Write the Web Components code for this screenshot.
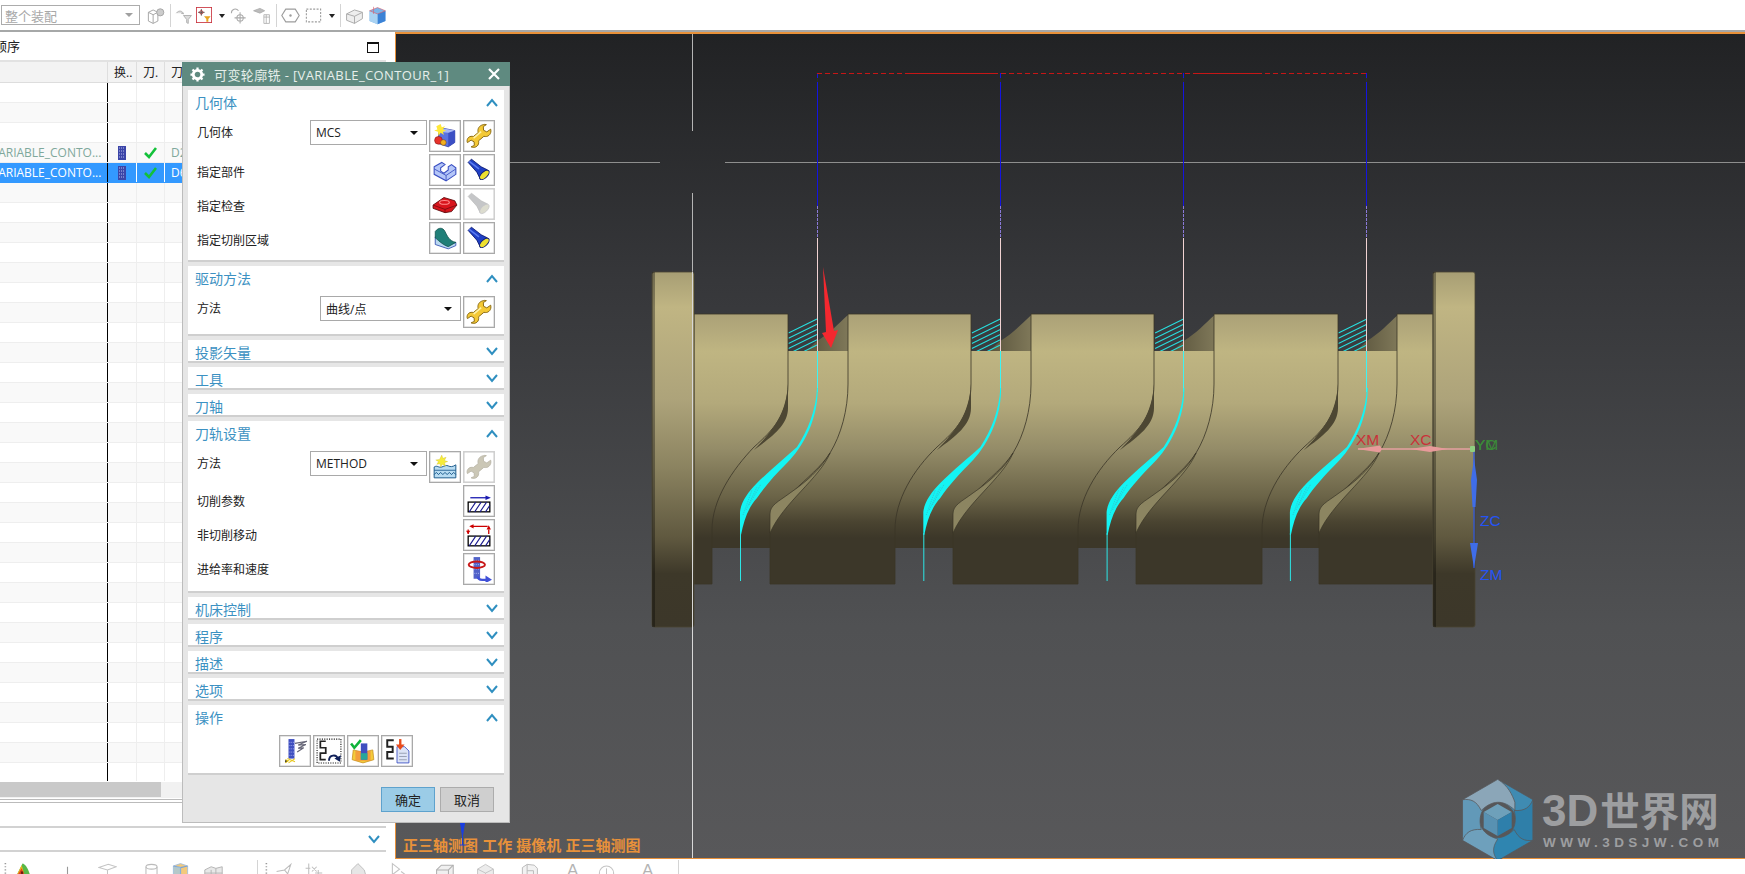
<!DOCTYPE html>
<html lang="zh">
<head>
<meta charset="utf-8">
<title>可变轮廓铣</title>
<style>
  html, body { margin: 0; height: 874px; overflow: hidden; background: #fff; }
  body { font-family: "Open Sans", "Noto Sans CJK SC", sans-serif; }
</style>
</head>
<body>
<cad-app>
  <cad-toolbar slot="top" kind="top"></cad-toolbar>
  <nav-panel slot="nav"></nav-panel>
  <cad-viewport slot="view"></cad-viewport>
  <cad-toolbar slot="bottom" kind="bottom"></cad-toolbar>
  <op-dialog slot="dialog" heading="可变轮廓铣 - [VARIABLE_CONTOUR_1]">
    <dlg-panel heading="几何体" open>
      <dlg-row label="几何体" top>
        <dlg-select value="MCS" width="117"></dlg-select>
        <nx-icon name="geomNew" framed></nx-icon>
        <nx-icon name="wrench" framed></nx-icon>
      </dlg-row>
      <dlg-row label="指定部件">
        <nx-icon name="part" framed></nx-icon>
        <nx-icon name="torch" framed></nx-icon>
      </dlg-row>
      <dlg-row label="指定检查">
        <nx-icon name="check" framed></nx-icon>
        <nx-icon name="torchOff" framed off></nx-icon>
      </dlg-row>
      <dlg-row label="指定切削区域">
        <nx-icon name="area" framed></nx-icon>
        <nx-icon name="torch" framed></nx-icon>
      </dlg-row>
    </dlg-panel>
    <dlg-panel heading="驱动方法" open>
      <dlg-row label="方法" top>
        <dlg-select value="曲线/点" width="141"></dlg-select>
        <nx-icon name="wrench" framed></nx-icon>
      </dlg-row>
    </dlg-panel>
    <dlg-panel heading="投影矢量"></dlg-panel>
    <dlg-panel heading="工具"></dlg-panel>
    <dlg-panel heading="刀轴"></dlg-panel>
    <dlg-panel heading="刀轨设置" open>
      <dlg-row label="方法" top>
        <dlg-select value="METHOD" width="117"></dlg-select>
        <nx-icon name="method" framed></nx-icon>
        <nx-icon name="wrenchOff" framed off></nx-icon>
      </dlg-row>
      <dlg-row label="切削参数" flat><nx-icon name="cutParams" framed></nx-icon></dlg-row>
      <dlg-row label="非切削移动" flat><nx-icon name="nonCut" framed></nx-icon></dlg-row>
      <dlg-row label="进给率和速度" flat><nx-icon name="feeds" framed></nx-icon></dlg-row>
    </dlg-panel>
    <dlg-panel heading="机床控制"></dlg-panel>
    <dlg-panel heading="程序"></dlg-panel>
    <dlg-panel heading="描述"></dlg-panel>
    <dlg-panel heading="选项"></dlg-panel>
    <dlg-panel heading="操作" open>
      <dlg-row center>
        <nx-icon name="generate" framed></nx-icon>
        <nx-icon name="replay" framed></nx-icon>
        <nx-icon name="verify" framed></nx-icon>
        <nx-icon name="listing" framed></nx-icon>
      </dlg-row>
    </dlg-panel>
  </op-dialog>
</cad-app>

<script>
// Icon artwork, all on a 24x24 box.
const WRENCH = "M17 1.500c-3.500 0-6 2.500-6 5.500 0 .8.1 1.300.3 1.800L6.800 12.500c-3-.9-5.800 1-5.800 4 0 .7.1 1.200.3 1.600l3.400-2.300 2.800 1.600.2 3.300-3 1.300c3 1.500 7-.3 7-4 0-.6 0-1-.2-1.500l5-4.200c3.500 1 6.500-1.500 6.500-5 0-.6-.1-1.100-.2-1.600l-3.600 2.500-3-1.500-.2-3.400 2.800-1.800c-.6-.2-1.100-.3-1.800-.3z";
const SNAKE = '<path d="M9 2H3v6h5v5H3v6h6" fill="none" stroke="#222" stroke-width="1.800"/>';
const HATCH = '<rect x="2" y="13" width="20" height="9" fill="#fff" stroke="#000" stroke-width="1.200"/><path d="M3 22l6-9M8 22l6-9M13 22l6-9M18 22l4-6" stroke="#1a1a90" stroke-width="1"/>';
const ICONS = {
  wrench: `<path d="${WRENCH}" fill="#f4c936" stroke="#8a6a12" stroke-width=".9"/><path d="M7 14l7-6" stroke="#fff2a8" stroke-width="1.400"/>`,
  wrenchOff: `<path d="${WRENCH}" fill="#cbc7b6" stroke="#b5b1a2" stroke-width=".7"/>`,
  geomNew: `<path d="M6 8l5-3 10 2v11l-6 4-9-3z" fill="#5a72e0" stroke="#26349a" stroke-width=".7"/><path d="M15 9l6-2v11l-6 4z" fill="#3b4fc4"/><path d="M6 8l9 1 6-2-10-2z" fill="#a9b8f4"/><path d="M8 1l1 3 3-1-2 3 3 1-3 1 1 3-3-2-2 3-.5-4L2 7l3-1-1-3z" fill="#ffe838"/><circle cx="6" cy="16" r="3.600" fill="#e8322a" stroke="#7a1010" stroke-width=".5"/><circle cx="10.500" cy="18" r="2.600" fill="#f2b020" stroke="#7a4a10" stroke-width=".5"/>`,
  part: `<path d="M2 9l7-4 3 2-4 3v3l3 2 4-3V9l3-2 4 3v6l-9 6-11-6z" fill="#b4c6f8" stroke="#3a4fc2" stroke-width="1"/><path d="M2 11l11 6 9-6M13 17v5" fill="none" stroke="#3a4fc2" stroke-width=".8"/>`,
  torch: `<path d="M2 5l3-3 9 7 6 3-7 8-3-6z" fill="#1f3fc4" stroke="#0c1a70" stroke-width=".8"/><path d="M3 4l9 7" stroke="#5c7cf0" stroke-width="1.400"/><ellipse cx="17" cy="16.500" rx="5.500" ry="2.800" transform="rotate(-45 17 16.500)" fill="#eee030" stroke="#0c1a70" stroke-width=".9"/>`,
  torchOff: `<path d="M2 5l3-3 9 7 6 3-7 8-3-6z" fill="#c5c6c8" stroke="#bbb" stroke-width=".6"/><ellipse cx="17" cy="16.500" rx="5.500" ry="2.800" transform="rotate(-45 17 16.500)" fill="#dcdccf" stroke="#c5c6c8" stroke-width=".7"/>`,
  check: `<path d="M1 13l10-7 10 3 2 4-5 6-6 1-11-4z" fill="#d8141c" stroke="#5a0a0c" stroke-width=".8"/><path d="M1 13l11 4 11-4M12 17v3" fill="none" stroke="#7a0c10" stroke-width=".8"/><ellipse cx="11.500" cy="10.500" rx="4.500" ry="1.800" fill="none" stroke="#ff8f8f" stroke-width="1"/>`,
  area: `<path d="M3 11L3 18 15 22 22 19 22 16 14 19 6 9z" fill="#b9d8f0" stroke="#3450b0" stroke-width=".8"/><path d="M3 6C6 2 10 2 12 6s4 9 10 10l-7 4C9 18 5 13 3 12z" fill="#207f78" stroke="#0e4f4a" stroke-width=".7"/>`,
  method: `<path d="M2 12c3-2 4 1 7 0s4-2 6-1 4 1 7-1v12H2z" fill="#b8dcf2" stroke="#1c5a8c" stroke-width=".9"/><path d="M2 15h20" stroke="#1c5a8c" stroke-width=".8"/><path d="M2 19l2-2 2 2 2-2 2 2 2-2 2 2 2-2 2 2 2-2 2 2" fill="none" stroke="#1c5a8c" stroke-width=".9"/><path d="M9 1l1 3 3-1-1.500 3 3 1-3 1 1 3-3-1.500L8 12l-.5-3-3 .5L6 7 3.500 5.500 7 5z" fill="#f6ec3a" stroke="#c9b820" stroke-width=".3"/>`,
  cutParams: `${HATCH}<path d="M4 9h15" stroke="#1a1ab0" stroke-width="1.200"/><path d="M23 9l-5-2v4z" fill="#1a1ab0"/>`,
  nonCut: `${HATCH}<path d="M5 4h15M2 7v4M21 7v4" stroke="#c00" stroke-width="1.200"/><path d="M3 4l4-2v4zM0 8h4l-2 3zM19 7h4l-2-4z" fill="#c00"/>`,
  feeds: `<rect x="7" y="1" width="6" height="20" fill="#5162c8"/><path d="M7 4h6M7 8h6M7 12h6M7 16h6" stroke="#a9b4ee" stroke-width=".9" stroke-dasharray="1 1"/><ellipse cx="10" cy="8" rx="7.500" ry="3" fill="none" stroke="#c81818" stroke-width="1.800"/><path d="M11 19q0 3 4 3h4" fill="none" stroke="#4050d8" stroke-width="2.200"/><path d="M18 18l6 4-6 3z" fill="#4050d8"/>`,
  generate: `<rect x="6" y="1" width="5.500" height="18" fill="#3f4fc0"/><path d="M6 4h5.500M6 7h5.500M6 10h5.500M6 13h5.500M6 16h5.500" stroke="#a9b4ee" stroke-width=".8" stroke-dasharray="1 1"/><path d="M12 5l11-2-8 3.500 7-.5-7 3.500 5-.5-6 4" fill="none" stroke="#667" stroke-width="1.100"/><path d="M3 20l3 1-3 2M5 19l7 3M12 19l-6 4" stroke="#e8c820" stroke-width="1"/>`,
  replay: `<rect x="1" y="1" width="22" height="22" fill="none" stroke="#111" stroke-width="1" stroke-dasharray="1 1.200"/><path d="M9 3H4v6h5v5H4v6h5" fill="none" stroke="#222" stroke-width="1.600"/><path d="M12 21c0-6 7-6 8-2" fill="none" stroke="#10205a" stroke-width="1.800"/><path d="M23 16l-1 6-5-3z" fill="#10205a"/>`,
  verify: `<path d="M3 11l9 2 9-2 1 9-10 3-10-3z" fill="#f4cb3a" stroke="#c89020" stroke-width=".7"/><path d="M5 12h14v9H5z" fill="#f28a3c" opacity=".7"/><rect x="10" y="5" width="6" height="15" fill="#3f4fc0"/><rect x="10" y="14" width="6" height="6" fill="#27a69a"/><path d="M1 5l3 4 6-7" fill="none" stroke="#0fb33a" stroke-width="2.400"/>`,
  listing: `${SNAKE}<path d="M12 8h7l4 4v11H12z" fill="#dde4f6" stroke="#3a4fc2" stroke-width=".8"/><path d="M14 14h7M14 17h7M14 20h7" stroke="#9aa2b5" stroke-width="1"/><path d="M15 1v6" stroke="#e84b1c" stroke-width="2.200"/><path d="M11 6h8l-4 5z" fill="#e84b1c"/>`,
  // toolbars
  asm: `<g fill="none" stroke="#a4a4a4" stroke-width="1.200"><path d="M3 8l6-3 6 3v11l-6 3-6-3zM9 11v11M3 8l6 3 6-3"/><circle cx="18" cy="8" r="4.500" fill="#ccc"/></g>`,
  funnel: `<path d="M3 9c3-4 8-3 9 1l-3-1M12 12h10l-4 5v5l-2-1v-4z" fill="#ddd" stroke="#b0b0b0" stroke-width="1.200"/>`,
  filterOn: `<rect x=".5" y=".5" width="23" height="23" fill="#fff" stroke="#c8323c" stroke-width="1.500"/><path d="M8 3v10M3 8h10" stroke="#444" stroke-width="1.200"/><circle cx="8" cy="8" r="2.500" fill="none" stroke="#9a2020" stroke-width="1.200"/><path d="M12 14h10l-3.500 4v4h-3v-4z" fill="#e8a420"/>`,
  snapCross: `<g fill="none" stroke="#a9a9a9" stroke-width="1.300"><circle cx="14" cy="15" r="4"/><path d="M14 8v14M7 15h14M3 9c0-5 6-7 9-3"/></g>`,
  cells: `<g fill="#bbb" stroke="#aaa"><path d="M2 6l8-3 6 3-6 3z"/><path d="M15 11h7v11h-7z" fill="none"/><path d="M15 14h7M18 11v11" fill="none"/></g>`,
  hexDot: `<path d="M6 4h12l5 8-5 8H6l-5-8z" fill="none" stroke="#9c9c9c" stroke-width="1.400"/><circle cx="12" cy="12" r="1.500" fill="#9c9c9c"/>`,
  dashBox: `<rect x="3" y="4" width="18" height="16" fill="none" stroke="#9c9c9c" stroke-width="1.400" stroke-dasharray="2.500 1.800"/>`,
  viewBox: `<g fill="#eee" stroke="#aaa" stroke-width="1.200"><path d="M2 10l10-5 10 3v8l-10 6-10-4z"/><path d="M2 10l10 3 10-5M12 13v9" fill="none"/></g>`,
  colorCube: `<path d="M2 6l10-4 10 4v13l-10 4-10-4z" fill="#7cb6ea"/><path d="M12 10l10-4v13l-10 4z" fill="#3b82d6"/><path d="M2 6l10 4v13L2 19z" fill="#a9d2f2"/><path d="M2 6l10-4 10 4-10 4zM7 1v9" fill="none" stroke="#d86070" stroke-width=".8"/>`,
  rainbow: `<path d="M1 24L12 2c4 1 9 8 11 22z" fill="#58b848"/><path d="M3 20L11 4l5 18z" fill="#f2b21c"/><path d="M6 16l5-8 3 8z" fill="#e04020"/><rect x="10" y="12" width="3" height="3" fill="#6a1a10"/>`,
  grip: `<path d="M2 2h2M2 6h2M2 10h2M2 14h2M2 18h2" stroke="#9a9a9a" stroke-width="1.500" stroke-dasharray="2 1"/>`,
  tee: `<path d="M12 6v18" stroke="#999" stroke-width="1.400"/>`,
  plate: `<path d="M1 7l12-4 10 3-11 4zM12 10v10M6 16h12" fill="none" stroke="#c4c4c4" stroke-width="1.300"/>`,
  cyl: `<g fill="none" stroke="#bbb" stroke-width="1.300"><ellipse cx="12" cy="6" rx="7" ry="3"/><path d="M5 6v16M19 6v16"/></g>`,
  yellowBox: `<path d="M3 5l9-3 9 3v19H3z" fill="#f3c97c" stroke="#9abbe0"/><path d="M3 5l9 2 9-2M12 7v17" fill="none" stroke="#7aa2d6" stroke-width="1.500"/><path d="M3 6h9v18H3z" fill="#9ac8ea" opacity=".7"/>`,
  blocks: `<g fill="#e8e8e8" stroke="#b4b4b4" stroke-width="1.200"><path d="M1 10l8-4 6 2 8-2v18H1z"/><path d="M1 14h22M9 10v14M15 8v16" fill="none"/></g>`,
  cutA: `<g fill="none" stroke="#bdbdbd" stroke-width="1.300"><path d="M2 12l10-2 8-7-4 12-8 6M12 10l4 5M14 22h8"/></g>`,
  cutB: `<g fill="none" stroke="#bdbdbd" stroke-width="1.300"><path d="M6 2v20M2 8h6M10 6l6 6M16 6l-6 6M14 14h9M18 10v12"/></g>`,
  solidA: `<path d="M2 10l8-8 8 8 4 14H2z" fill="#e6e6e6" stroke="#bdbdbd" stroke-width="1.200"/>`,
  bowTie: `<path d="M3 2l9 7-9 7zM14 12l8 6" fill="none" stroke="#c4c4c4" stroke-width="1.400"/>`,
  boxA: `<g fill="#f0f0f0" stroke="#b0b0b0" stroke-width="1.300"><path d="M2 10l6-6h15v18H2z"/><path d="M2 10h15l6-6M17 10v12" fill="none"/></g>`,
  boxB: `<g fill="#ececec" stroke="#c4c4c4" stroke-width="1.200"><path d="M2 9l10-6 10 6v15H2z"/><path d="M2 9l10 5 10-5M12 14v10" fill="none"/></g>`,
  boxC: `<g fill="#f2f2f2" stroke="#b8b8b8" stroke-width="1.200"><path d="M3 7l6-4 9 1 4 4v16H3z"/><path d="M9 3v21M9 11h8v13" fill="none"/></g>`,
  circ: `<g fill="none" stroke="#c4c4c4" stroke-width="1.300"><circle cx="12" cy="14" r="9"/><path d="M12 8v10"/></g>`
};

class NxIcon extends HTMLElement {
  connectedCallback() {
    const size = this.getAttribute("size") || (this.hasAttribute("framed") ? 26 : 18);
    this.attachShadow({ mode: "open" }).innerHTML = `
      <style>
        :host { display: inline-flex; align-items: center; justify-content: center; flex: none; box-sizing: border-box; }
        :host([framed]) { width: 32px; height: 32px; background: #fff; border: 1px solid #a9a9a9; box-shadow: inset 0 0 0 .5px #c9c9c9; }
        :host([off]) { border-color: #d0d0d0; }
        svg { display: block; }
      </style>
      <svg width="${size}" height="${size}" viewBox="0 0 24 24">${ICONS[this.getAttribute("name")] || ""}</svg>`;
  }
}
customElements.define("nx-icon", NxIcon);

class CadToolbar extends HTMLElement {
  connectedCallback() {
    const bottom = this.getAttribute("kind") === "bottom";
    // [name, left edge in px]; the gaps between these icons are irregular in the app too
    const items = bottom
      ? [["grip",3],["rainbow",13],["tee",58],["plate",98],["cyl",142],["yellowBox",171],["blocks",204],["grip",264],["cutA",275],["cutB",304],["solidA",350],["bowTie",390],["boxA",435],["boxB",476],["boxC",520]]
      : [["asm",147],["funnel",175],["filterOn",197],["snapCross",230],["cells",253],["hexDot",282],["dashBox",305],["viewBox",346],["colorCube",369]];
    let x = bottom ? 0 : 140;
    let html = "";
    for (const [name, at] of items) {
      html += `<nx-icon name="${name}" size="${name === "filterOn" ? 16 : 19}" style="margin-left:${at - x}px"></nx-icon>`;
      x = at + (name === "filterOn" ? 16 : 19);
    }
    this.attachShadow({ mode: "open" }).innerHTML = `
      <style>
        :host { display: block; overflow: hidden; background: #fff; position: relative; font: 13px "Open Sans", "Noto Sans CJK SC", sans-serif; }
        :host([kind=top]) { height: 32px; box-sizing: border-box; border-bottom: 2px solid #a6a8a8; }
        :host([kind=bottom]) { height: 15px; }
        .bar { display: flex; align-items: center; height: 30px; }
        :host([kind=bottom]) .bar { height: 24px; padding-top: 3px; align-items: flex-start; }
        .combo { width: 139px; height: 20px; margin-left: 1px; box-sizing: border-box; border: 1px solid #acacac; color: #a8a8a8; display: flex; align-items: center; padding: 0 4px 0 3px; justify-content: space-between; flex: none; margin-right: -1px; }
        .combo i { border: 4px solid transparent; border-top: 4px solid #a0a0a0; border-bottom: 0; width: 0; height: 0; margin-right: 2px; }
        .sep { position: absolute; top: 4px; width: 1px; height: 23px; background: #d4d4d4; }
        :host([kind=bottom]) .sep { top: 1px; height: 14px; }
        .drop { position: absolute; top: 14px; border: 3.500px solid transparent; border-top: 4px solid #222; border-bottom: 0; }
        .txt { position: absolute; top: 2px; color: #b4b4b4; font: 17px "Liberation Sans", sans-serif; }
      </style>
      <div class="bar">
        ${bottom ? "" : '<div class="combo">整个装配<i></i></div>'}
        ${html}
      </div>
      ${bottom
        ? '<div class="sep" style="left:257px"></div><div class="sep" style="left:678px"></div><span class="txt" style="left:567px">A</span><span class="txt" style="left:642px">A</span><nx-icon name="circ" size="19" style="position:absolute;left:597px;top:3px"></nx-icon>'
        : '<div class="sep" style="left:170px"></div><div class="sep" style="left:276px"></div><div class="sep" style="left:340px"></div><div class="drop" style="left:219px"></div><div class="drop" style="left:329px"></div>'}`;
  }
}
customElements.define("cad-toolbar", CadToolbar);

class NavPanel extends HTMLElement {
  connectedCallback() {
    const rows = [];
    for (let k = 0; k < 35; k++) {
      const op = k === 3 || k === 4;
      const cls = (k % 2 ? "row alt" : "row") + (k === 3 ? " done" : "") + (k === 4 ? " sel" : "");
      rows.push(`<div class="${cls}">
        <div class="c name">${op ? "<span>VARIABLE_CONTO...</span>" : ""}</div>
        <div class="c sw">${op ? '<svg width="8" height="14" viewBox="0 0 8 14"><rect width="8" height="14" fill="#3b45a8"/><path d="M1 2h6M1 5h6M1 8h6M1 11h6" stroke="#b6bcec" stroke-dasharray="1 1"/></svg>' : ""}</div>
        <div class="c ok">${op ? '<svg width="13" height="12" viewBox="0 0 13 12"><path d="M1 6l4 4 7-9" fill="none" stroke="#13c13a" stroke-width="2.600"/></svg>' : ""}</div>
        <div class="c tool">${k === 3 ? "D2" : k === 4 ? "D6" : ""}</div>
      </div>`);
    }
    this.attachShadow({ mode: "open" }).innerHTML = `
      <style>
        :host { display: flex; flex-direction: column; height: 100%; overflow: hidden; background: #fff; font: 12px "Open Sans", "Noto Sans CJK SC", sans-serif; color: #222; }
        .title { height: 28px; flex: none; position: relative; display: flex; align-items: center; padding-bottom: 2px; box-sizing: border-box; }
        .title span { margin-left: -6px; font-size: 13px; }
        .max { position: absolute; left: 367px; top: 10px; width: 12px; height: 11px; box-sizing: border-box; border: 1px solid #111; border-top-width: 2px; }
        .table { width: 386px; height: 721px; overflow: hidden; box-sizing: border-box; border-top: 2px solid #e2e2e2; flex: none; }
        .row, .head { display: grid; grid-template-columns: 108px 29px 28px 1fr; }
        .head { height: 21px; background: #f3f3f3; box-sizing: border-box; border-bottom: 1px solid #ddd; }
        .head div { border-right: 1px solid #dedede; display: flex; align-items: center; padding-left: 6px; min-width: 0; }
        .row { height: 20px; box-sizing: border-box; border-bottom: 1px solid #eee; }
        .alt { background: #f9f9f9; }
        .c { border-right: 1px solid #eee; display: flex; align-items: center; justify-content: center; overflow: hidden; white-space: nowrap; }
        .c.name { justify-content: flex-start; border-right: 1px solid #000; }
        .c.name span { margin-left: -9px; }
        .c.tool { justify-content: flex-start; padding-left: 6px; }
        .done .name, .done .tool { color: #7fa89c; }
        .sel { background: #3399ff; color: #fff; border-bottom-color: #3399ff; }
        .sel .c { border-right-color: #fff; }
        .sel .c.name { border-right-color: #000; }
        .scroll { height: 16px; background: #f1f1f1; flex: none; margin-top: 1px; }
        .scroll div { width: 161px; height: 15px; background: #c9c9c9; }
        .dbl { height: 2px; border-top: 1px solid #bbb; border-bottom: 1px solid #bbb; margin-top: 1px; flex: none; }
        .fold { margin-top: 23px; width: 386px; height: 22px; border-top: 2px solid #d2d2d2; border-bottom: 2px solid #d2d2d2; flex: none; display: flex; justify-content: flex-end; align-items: center; box-sizing: content-box; }
        .fold svg { margin-right: 6px; }
      </style>
      <div class="title"><span>顺序</span><div class="max"></div></div>
      <div class="table">
        <div class="head"><div></div><div>换..</div><div>刀.</div><div>刀</div></div>
        ${rows.join("")}
      </div>
      <div class="scroll"><div></div></div>
      <div class="dbl"></div>
      <div class="fold"><svg width="12" height="9" viewBox="0 0 12 9"><path d="M1 1l5 6 5-6" fill="none" stroke="#2f8fc0" stroke-width="2"/></svg></div>`;
  }
}
customElements.define("nav-panel", NavPanel);

class DlgPanel extends HTMLElement {
  connectedCallback() {
    const open = this.hasAttribute("open");
    this.attachShadow({ mode: "open" }).innerHTML = `
      <style>
        :host { display: block; background: #fff; box-shadow: inset 0 -2px 0 #cfcfcf; box-sizing: border-box; height: 23px; overflow: hidden; }
        :host([open]) { height: auto; padding-bottom: 6px; }
        header { height: 23px; display: flex; align-items: center; justify-content: space-between; padding: 3px 6px 0 7px; box-sizing: border-box; color: #3c91c2; font-size: 14px; line-height: 14px; }
        header svg { margin-top: -4px; }
        :host([open]) header { height: 30px; padding-top: 0; padding-bottom: 4px; }
        :host([open]) header svg { margin-top: -2px; }
        .body { display: flex; flex-direction: column; }
      </style>
      <header><span>${this.getAttribute("heading")}</span>
        <svg width="12" height="9" viewBox="0 0 12 9"><path d="${open ? "M1 8l5-6 5 6" : "M1 1l5 6 5-6"}" fill="none" stroke="#2f8fc0" stroke-width="2"/></svg>
      </header>
      <div class="body"><slot></slot></div>`;
  }
}
customElements.define("dlg-panel", DlgPanel);

class DlgRow extends HTMLElement {
  connectedCallback() {
    const label = this.getAttribute("label");
    this.attachShadow({ mode: "open" }).innerHTML = `
      <style>
        :host { display: flex; justify-content: space-between; align-items: flex-start; height: 32px; margin-bottom: 2px; padding: 0 9px; font-size: 12px; color: #222; }
        :host([center]) { justify-content: center; }
        .label { line-height: 32px; padding-top: 3px; }
        :host([top]) .label { line-height: 25px; padding-top: 0; }
        :host([flat]) .label { line-height: 32px; padding-top: 1px; }
        .ctl { display: flex; gap: 2px; }
      </style>
      ${label ? `<span class="label">${label}</span>` : ""}
      <div class="ctl"><slot></slot></div>`;
  }
}
customElements.define("dlg-row", DlgRow);

class DlgSelect extends HTMLElement {
  connectedCallback() {
    this.attachShadow({ mode: "open" }).innerHTML = `
      <style>
        :host { display: flex; align-items: center; justify-content: space-between; box-sizing: border-box; width: ${this.getAttribute("width")}px; height: 25px; border: 1px solid #a9a9a9; background: #fff; padding: 0 8px 0 5px; font-size: 12px; color: #222; }
        i { width: 0; height: 0; border: 4px solid transparent; border-top: 4px solid #111; border-bottom: 0; }
      </style>
      <span>${this.getAttribute("value")}</span><i></i>`;
  }
}
customElements.define("dlg-select", DlgSelect);

class OpDialog extends HTMLElement {
  connectedCallback() {
    this.attachShadow({ mode: "open" }).innerHTML = `
      <style>
        :host { display: block; position: absolute; left: 182px; top: 62px; width: 328px; height: 761px; box-sizing: border-box; background: #e6e6e6; border: 1px solid #bcbcbc; border-top: 0; font: 12px "Open Sans", "Noto Sans CJK SC", sans-serif; }
        .bar { height: 24px; margin: 0 -1px; background: #5f8a80; color: #e6efeb; display: flex; align-items: center; font-size: 13px; letter-spacing: .38px; white-space: nowrap; }
        .bar svg { flex: none; }
        .gear { margin: 0 9px 0 8px; }
        .x { margin-left: auto; margin-right: 10px; }
        .panels { display: flex; flex-direction: column; gap: 4px; padding: 4px 5px 0; }
        footer { display: flex; justify-content: flex-end; gap: 5px; padding: 12px 15px 0 0; }
        button { width: 54px; height: 25px; padding: 0; font: inherit; font-size: 13px; color: #222; background: #cfcfcf; border: 1px solid #acacac; }
        button.ok { background: #9bcce7; border-color: #5ea2cd; }
      </style>
      <div class="bar">
        <svg class="gear" width="15" height="15" viewBox="0 0 16 16"><circle cx="8" cy="8" r="4.500" fill="none" stroke="#fff" stroke-width="3"/><path d="M8 .5v3M8 12.500v3M.5 8h3M12.500 8h3M2.700 2.700l2 2M11.300 11.300l2 2M13.300 2.700l-2 2M4.700 11.300l-2 2" stroke="#fff" stroke-width="2.400"/></svg>
        <span>${this.getAttribute("heading")}</span>
        <svg class="x" width="12" height="12" viewBox="0 0 12 12"><path d="M1 1l10 10M11 1L1 11" stroke="#fff" stroke-width="2.200"/></svg>
      </div>
      <div class="panels"><slot></slot></div>
      <footer><button class="ok">确定</button><button>取消</button></footer>`;
  }
}
customElements.define("op-dialog", OpDialog);

class CadViewport extends HTMLElement {
  connectedCallback() {
    const P = 183.3;
    const land = (a, b) => `M${a} 314V384C${a} 410 ${a-7} 435 ${a-18} 453C${a-35} 480 ${a-77} 500 ${a-78} 533V584H${b-76}V530C${b-76} 500 ${b-58} 470 ${b-34} 447C${b-15} 430 ${b} 415 ${b} 384V314Z`;
    const lands = [
      "M694 314H788V384C788 415 773 430 754 447C732 470 712 500 712 530V584H694Z",
      land(848, 971), land(1031, 1154), land(1214, 1338),
      "M1397 314V384C1397 410 1390 435 1379 453C1362 480 1320 500 1319 533V584H1433V314Z"
    ];
    let back = "", path = "", slivers = "";
    for (let i = 0; i < 4; i++) {
      const x = Math.floor(817 + P * i) + .5, t = (n) => (n + P * i).toFixed(1);
      // wedge of groove wall, then the hatched passes on it
      back += `<path d="M${t(806)} 351L${t(817)} 341C${t(830)} 333 ${t(838)} 324 ${t(848)} 315V351Z" fill="url(#wall)"/>`;
      for (let k = 0; k < 6; k++) {
        const y = 333 + k * 5.2;
        back += `<path d="M${t(788.5)} ${y}L${t(817)} ${y - 14}" stroke="#28dede" stroke-width="1.100" clip-path="url(#hatch${i})"/>`;
      }
      back += `<clipPath id="hatch${i}"><rect x="${t(788)}" y="316" width="29.500" height="35"/></clipPath>`;
      // tool path: approach, ribbon, retract
      path += `<path d="M${x} 73V206" stroke="#1414e0" stroke-width="1"/>
        <path d="M${x} 206V238" stroke="#8a7ad8" stroke-width="1" stroke-dasharray="3 1"/>
        <path d="M${x} 78V82" stroke="#2a2c2e" stroke-width="1"/>
        <path d="M${x} 238V351" stroke="#f0d2d2" stroke-width="1"/>
        <path d="M${x} 351V392" stroke="#3cf4f4" stroke-width="1"/>
        <path d="M${t(817)} 388C${t(816)} 410 ${t(808)} 430 ${t(797)} 447C${t(785)} 458 ${t(770)} 470 ${t(757)} 483C${t(748)} 492 ${t(741)} 502 ${t(740)} 512V535H${t(741)}C${t(744)} 520 ${t(748)} 508 ${t(757)} 498C${t(765)} 486 ${t(776)} 474 ${t(785)} 465C${t(798)} 453 ${t(818)} 425 ${t(817.800)} 388Z" fill="#14f4f4"/>
        <path d="M${t(743)} 515L${t(752)} 490M${t(746)} 510L${t(757)} 487M${t(749)} 505L${t(761)} 484" stroke="#3ca8b4" stroke-width=".6" stroke-dasharray="1 1"/>
        <path d="M${t(740.500)} 533V581" stroke="#2ce6e6" stroke-width="1"/>`;
    }
    // dark and light undercut slivers along the helix
    for (const a of [848, 1031, 1214, 1397]) {
      slivers += `<path d="M${a-78} 514C${a-78} 505 ${a-70} 502 ${a-58} 493C${a-42} 482 ${a-28} 470 ${a-18} 453C${a-28} 478 ${a-65} 503 ${a-78} 533Z" fill="#8c8561" stroke="#3a3527" stroke-width=".7"/>`;
    }
    for (const b of [788, 971, 1154, 1338]) {
      slivers += `<path d="M${b} 384V408C${b} 425 ${b-15} 436 ${b-34} 450C${b-15} 430 ${b-2} 415 ${b} 384Z" fill="#4d4733"/>`;
    }
    const petals = ["#3f8bb2", "#2f7fa9", "#2f85b0", "#6ea0bc", "#6299b8", "#8ba6b8"]
      .map((c, i) => `<path transform="rotate(${i * 60})" d="M0 -40.600L35.200 -20.300C35 -8 29 0 24 6L17 10C21 -6 14 -15 0 -19C6 -28 5 -34 0 -40.600Z" fill="${c}" stroke="#57585a" stroke-width=".7"/>`).join("");
    this.attachShadow({ mode: "open" }).innerHTML = `
      <style>
        :host { display: block; height: 100%; position: relative; box-sizing: border-box; border-top: 2px solid #e8913a; border-left: 1px solid #e8913a; border-bottom: 1px solid #e8913a; background: linear-gradient(#212224, #36373a 30%, #505153 72%, #58585a); }
        svg { display: block; overflow: visible; position: absolute; left: 0; top: 0; }
        text { font-family: "Liberation Sans", "Noto Sans CJK SC", sans-serif; }
      </style>
      <svg width="1349" height="826" viewBox="396 34 1349 826">
        <defs>
          <linearGradient id="body" gradientUnits="userSpaceOnUse" x1="0" y1="314" x2="0" y2="584">
            <stop offset="0" stop-color="#aba177"/><stop offset=".14" stop-color="#bfb582"/><stop offset=".33" stop-color="#b3a97b"/><stop offset=".5" stop-color="#948c68"/><stop offset=".68" stop-color="#6a6347"/><stop offset=".77" stop-color="#4a4431"/><stop offset=".83" stop-color="#3c3729"/><stop offset="1" stop-color="#3c3729"/>
          </linearGradient>
          <linearGradient id="flange" gradientUnits="userSpaceOnUse" x1="0" y1="272" x2="0" y2="627">
            <stop offset="0" stop-color="#a79e74"/><stop offset=".1" stop-color="#c0b583"/><stop offset=".36" stop-color="#ada37a"/><stop offset=".55" stop-color="#8b8360"/><stop offset=".75" stop-color="#5f583f"/><stop offset=".85" stop-color="#3d3829"/><stop offset="1" stop-color="#3c3729"/>
          </linearGradient>
          <linearGradient id="wall" x1="0" y1="0" x2="1" y2="0">
            <stop offset="0" stop-color="#5a543c"/><stop offset="1" stop-color="#7f7859"/>
          </linearGradient>
        </defs>

        <path d="M692.500 34V131M692.500 193V858" stroke="#b4b4b4" stroke-width="1"/>
        <path d="M396 162.500H660M725 162.500H1745" stroke="#8e8e8e" stroke-width="1"/>

        <rect x="694" y="351" width="739" height="197" fill="url(#body)"/>
        ${back}
        ${lands.map((d) => `<path d="${d}" fill="url(#body)" stroke="#3a3527" stroke-width=".8"/>`).join("")}
        ${slivers}

        <g>
          <rect x="652" y="272" width="42" height="355" rx="2" fill="url(#flange)" stroke="#4a4534" stroke-width=".8"/>
          <rect x="652" y="272" width="3" height="355" fill="#000" opacity=".32"/>
          <rect x="1433" y="272" width="42" height="355" rx="2" fill="url(#flange)" stroke="#4a4534" stroke-width=".8"/>
          <rect x="1433" y="272" width="3" height="355" fill="#000" opacity=".32"/>
        </g>
        <path d="M692.500 272V858" stroke="#d8d8d8" stroke-width="1"/>

        ${path}
        <path d="M817 73.500H1367" stroke="#c61616" stroke-width="1" stroke-dasharray="5 3"/>
        <path d="M908 73.500H998M1197 73.500H1262" stroke="#c61616" stroke-width="1"/>

        <path d="M823 267L834 331L838 330L831 348L822 333L826 332Z" fill="#f4282f"/>

        <path d="M1358 449H1473" stroke="#e6a0a0" stroke-width="1.400"/>
        <path d="M1357 449L1380 445.500L1382 449L1380 452.500ZM1410 449L1430 446L1448 449L1430 452Z" fill="#e79a9a"/>
        <path d="M1474 449V568" stroke="#2a55e8" stroke-width="1.200"/>
        <path d="M1474 458L1477 480L1475.500 507H1472.500L1471 480ZM1470 543H1478L1474 568Z" fill="#3f6de8"/>
        <rect x="1470" y="446" width="5" height="6" rx="1" fill="#8fcf7f"/>
        <g font-size="15.500">
          <text x="1356" y="445" fill="#c9323a">XM</text>
          <text x="1410" y="445" fill="#c9323a">XC</text>
          <text x="1475" y="450" fill="#3b8a38">YM</text>
          <text x="1475" y="450" fill="#3b8a38">YC</text>
          <text x="1480" y="526" fill="#2454f5">ZC</text>
          <text x="1480" y="580" fill="#2454f5">ZM</text>
        </g>

        <text x="403" y="851" fill="#e8913a" font-size="15" font-weight="700">正三轴测图 工作 摄像机 正三轴测图</text>
        <path d="M460.500 823H464.500L462.500 836ZM462.500 836V845M459.500 845H466" fill="#1a3ee0" stroke="#1a3ee0" stroke-width="1"/>

        <g transform="translate(1497.700 820)">
          ${petals}
          <path d="M0 -16L14 -8L0 0L-14 -8Z" fill="#6ea0ba"/>
          <path d="M-14 -8L0 0V16L-14 8Z" fill="#5891b2"/>
          <path d="M14 -8L0 0V16L14 8Z" fill="#2e7fab"/>
        </g>
        <text x="1542" y="826" font-size="44" font-weight="700" fill="#9d9ea0">3D<tspan font-size="39.500" dx="2">世界网</tspan></text>
        <text x="1543" y="847" font-size="13.500" font-weight="700" fill="#9d9ea0" textLength="176" lengthAdjust="spacing">WWW.3DSJW.COM</text>
      </svg>`;
  }
}
customElements.define("cad-viewport", CadViewport);

class CadApp extends HTMLElement {
  constructor() {
    super();
    this.attachShadow({ mode: "open" }).innerHTML = `
      <style>
        :host { display: grid; grid-template-columns: 395px 1fr; grid-template-rows: 32px 827px 15px; height: 874px; position: relative; overflow: hidden; }
        ::slotted([slot=top]), ::slotted([slot=bottom]) { grid-column: 1 / -1; }
      </style>
      <slot name="top"></slot>
      <slot name="nav"></slot>
      <slot name="view"></slot>
      <slot name="bottom"></slot>
      <slot name="dialog"></slot>`;
  }
}
customElements.define("cad-app", CadApp);
</script>
</body>
</html>
